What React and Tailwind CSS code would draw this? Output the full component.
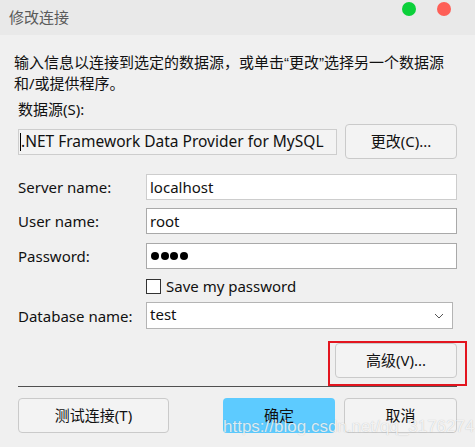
import React from 'react';

const latin = "font-['Noto_Sans','Noto_Sans_CJK_SC',sans-serif]";

function Field({ label, children, className = '' }) {
    return (
        <div className={`flex items-center ${className}`}>
            <div className="w-[128px] text-[15px] leading-5 text-[#111]">{label}</div>
            {children}
        </div>
    );
}

function Btn({ children, className = '' }) {
    return (
        <div className={`flex items-center justify-center rounded-[4px] border border-[#cacaca] bg-[#f3f3f3] text-[15px] text-[#111] ${className}`}>
            {children}
        </div>
    );
}

export default function App() {
    return (
        <div className={`relative w-[475px] h-[447px] bg-[#f0f0f0] overflow-hidden ${latin}`}>
            {/* title bar */}
            <div className="h-[35px] bg-[#e9e9e9] flex items-center pl-[9px] pr-[24px]">
                <span className="text-[15px] text-[#5a5a5a]">修改连接</span>
                <div className="ml-auto flex items-center gap-[21px] -mt-[18px]">
                    <div className="w-[14px] h-[14px] rounded-full bg-[#0bd03a]" />
                    <div className="w-[14px] h-[14px] rounded-full bg-[#fe5f57]" />
                </div>
            </div>

            <div className="px-[18px]">
                <p className="-ml-[4px] mt-[17px] text-[15px] leading-5 text-[#111] whitespace-nowrap">
                    输入信息以连接到选定的数据源，或单击<span className="font-['Liberation_Sans']">“</span>更改<span className="font-['Liberation_Sans']">”</span>选择另一个数据源<br />和/或提供程序。
                </p>

                <div className="mt-[6px] text-[15px] leading-5 text-[#111]">数据源(S):</div>

                <div className="mt-[5px] flex items-center">
                    <div className="w-[319px] h-[26px] border border-[#cdcdcd] bg-[#f3f3f3] flex items-center pl-[1px] text-[15.5px] text-[#111] whitespace-nowrap overflow-hidden">
                        <span className="w-px h-[18px] bg-black" />
                        <span>.NET Framework Data Provider for MySQL</span>
                    </div>
                    <Btn className="ml-auto w-[112px] h-[35px]">更改(C)...</Btn>
                </div>

                <Field label="Server name:" className="mt-[15px]">
                    <div className="w-[311px] h-[26px] border border-[#cdcdcd] bg-white flex items-center pl-[3px] text-[15px] text-[#111]">localhost</div>
                </Field>

                <Field label="User name:" className="mt-[8px]">
                    <div className="w-[311px] h-[26px] border border-[#a9a9a9] bg-white flex items-center pl-[3px] text-[15px] text-[#111]">root</div>
                </Field>

                <Field label="Password:" className="mt-[9px]">
                    <div className="w-[311px] h-[26px] border border-[#a9a9a9] bg-white flex items-center pl-[4px] gap-[1.5px]">
                        <span className="w-[8px] h-[8px] rounded-full bg-black" />
                        <span className="w-[8px] h-[8px] rounded-full bg-black" />
                        <span className="w-[8px] h-[8px] rounded-full bg-black" />
                        <span className="w-[8px] h-[8px] rounded-full bg-black" />
                    </div>
                </Field>

                <div className="mt-[9px] h-[16px] ml-[128px] flex items-center gap-[5px]">
                    <div className="w-[15px] h-[15px] border border-[#333] bg-white" />
                    <span className="text-[15px] leading-5 text-[#111]">Save my password</span>
                </div>

                <Field label="Database name:" className="mt-[8px]">
                    <div className="w-[307px] h-[27px] border border-[#b4b4b4] bg-white flex items-center pl-[3px] pr-[8px] text-[15px] text-[#111]">
                        <span className="-mt-[2px]">test</span>
                        <svg className="ml-auto" width="10" height="6" viewBox="0 0 10 6">
                            <path d="M1 1 L5 5 L9 1" fill="none" stroke="#555" strokeWidth="1" />
                        </svg>
                    </div>
                </Field>

                <div className="mt-[14px] flex justify-end">
                    <div className="relative">
                        <Btn className="w-[122px] h-[35px]">高级(V)...</Btn>
                        <div className="absolute -left-[7px] -top-[2px] w-[139px] h-[45px] border-2 border-[#e3151f]" />
                    </div>
                </div>

                <div className="mt-[8px] h-px bg-[#505050]" />

                <div className="mt-[11px] flex items-center">
                    <Btn className="w-[151px] h-[35px]">测试连接(T)</Btn>
                    <div className="ml-[54px] w-[112px] h-[35px] rounded-[4px] bg-[#5dcbff] flex items-center justify-center text-[15px] text-[#111]">确定</div>
                    <Btn className="ml-[9px] w-[113px] h-[35px]">取消</Btn>
                </div>
            </div>

            {/* watermark */}
            <div className="absolute left-[223px] top-[417px] font-['Liberation_Sans'] text-[17px] leading-5 text-white/80 [text-shadow:0_0_1px_rgba(0,0,0,0.25)] whitespace-nowrap">
                https://blog.csdn.net/qq_31762741
            </div>
        </div>
    );
}
